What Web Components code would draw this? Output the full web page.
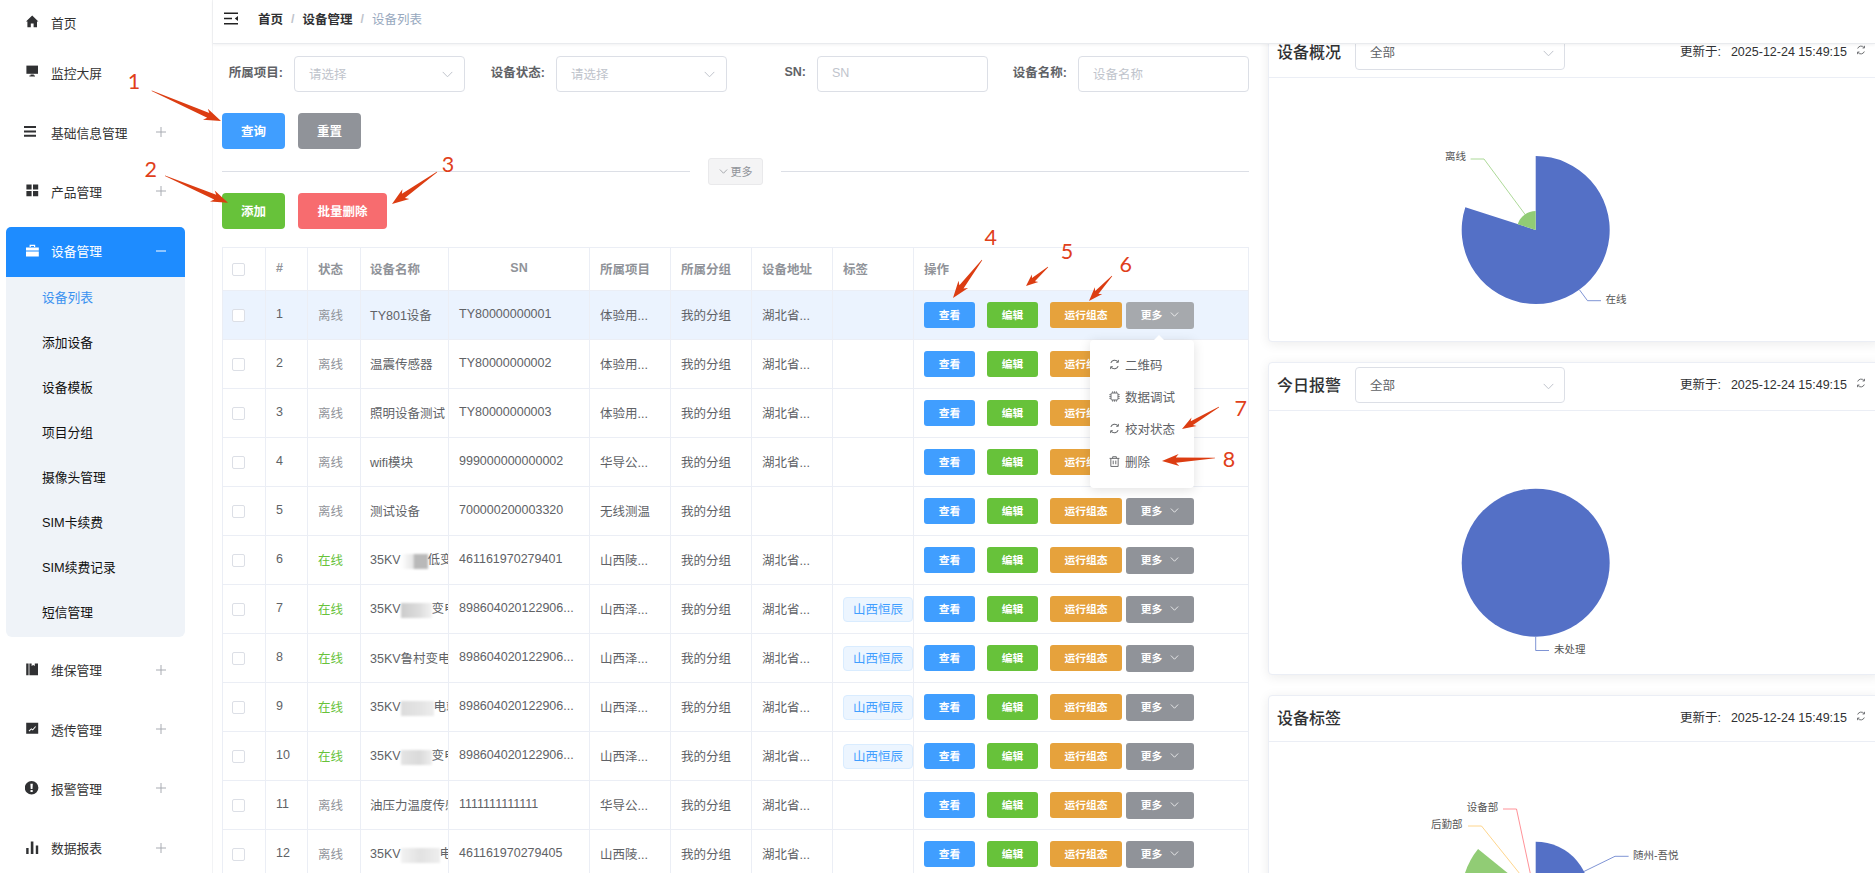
<!DOCTYPE html>
<html lang="zh-CN">
<head>
<meta charset="utf-8">
<title>设备列表</title>
<style>
html,body{margin:0;height:873px;overflow:hidden;background:#fff;}
body{font-family:"Liberation Sans","Noto Sans CJK SC",sans-serif;font-size:12.5px;color:#606266;}
</style>
</head>
<body>
<app-shell>
  <side-nav slot="side"></side-nav>
  <top-bar slot="top"></top-bar>
  <device-page slot="left"></device-page>
  <stat-card slot="right" title="设备概况" select="全部" chart="a"></stat-card>
  <stat-card slot="right" title="今日报警" select="全部" chart="b"></stat-card>
  <stat-card slot="right" title="设备标签" chart="c" compact></stat-card>
</app-shell>
<more-menu></more-menu>
<annot-layer></annot-layer>
<script>
const FONT='"Liberation Sans","Noto Sans CJK SC",sans-serif';
const chevron=(c='#c0c4cc',s=11)=>`<svg width="${s}" height="${Math.round(s*.6)}" viewBox="0 0 11 6.6" fill="none" stroke="${c}" stroke-width="1"><path d="M.7.7 5.5 5.6 10.3.7"/></svg>`;
const refresh=(c='#606266',s=11)=>`<svg width="${s}" height="${s}" viewBox="0 0 12 12" fill="none" stroke="${c}" stroke-width="1.1"><path d="M2 4.2A4.4 4.4 0 0 1 9.6 3"/><path d="M10 7.8A4.4 4.4 0 0 1 2.4 9"/><path d="M10.2 1v2.6H7.8" stroke-width="1"/><path d="M1.8 11V8.4h2.4" stroke-width="1"/></svg>`;

class Base extends HTMLElement{
  connectedCallback(){ if(this.shadowRoot) return; this.attachShadow({mode:'open'}).innerHTML=this.render(); }
}

customElements.define('app-shell',class extends Base{render(){return `
<style>
:host{display:grid;grid-template-columns:213px 1fr;width:1875px;height:873px;overflow:hidden;}
.side{overflow:hidden;height:873px;border-right:1px solid #f2f3f5;box-sizing:border-box;}
.main{display:flex;flex-direction:column;min-width:0;height:873px;}
.top{position:relative;z-index:1;}
.body{display:flex;flex:1;min-height:0;}
.left{width:1047px;flex:none;overflow:hidden;}
.right{flex:1;min-width:0;overflow:hidden;padding-left:8px;}
.cards{display:flex;flex-direction:column;gap:20px;margin-top:-15px;width:612px;padding-bottom:40px;}
</style>
<div class="side"><slot name="side"></slot></div>
<div class="main">
  <div class="top"><slot name="top"></slot></div>
  <div class="body">
    <div class="left"><slot name="left"></slot></div>
    <div class="right"><div class="cards"><slot name="right"></slot></div></div>
  </div>
</div>`}});

const ICONS={
 home:'<path d="M6.2 .6 12.4 6.4 11 6.4V12.2H7.6V8.4H4.8V12.2H1.4V6.4H0Z"/>',
 screen:'<path d="M.4 .6H12V8.8H.4Z"/><path d="M4.6 9.6H7.8V10.6H9V11.4H3.4V10.6H4.6Z"/>',
 list:'<path d="M0 1H12V3H0ZM0 5.4H12V7.4H0ZM0 9.8H12V11.8H0Z"/>',
 grid:'<path d="M.4 .4H5.6V5.6H.4ZM7 .4H12.2V5.6H7ZM.4 7H5.6V12.2H.4ZM7 7H12.2V12.2H7Z"/>',
 brief:'<path d="M3.6 3V.8H9.2V3H8V2H4.8V3Z"/><path d="M0 3.4H12.8V6.6H0ZM0 7.6H12.8V12.4H0Z"/>',
 book:'<path d="M.2 .6H2.6V12.2H.2ZM3.4 .6H5.6V3L7.2 2 8.8 3V.6H12V12.2H3.4Z"/>',
 chart:'<path fill-rule="evenodd" d="M.2 .8H12.2V11.8H.2ZM2.6 8.8 3.3 9.5 5.4 7.6 6.8 8.6 10 4.8 9.3 4.2 6.6 7.2 5.3 6.3Z"/>',
 alert:'<path fill-rule="evenodd" d="M6.6 0a6.8 6.8 0 1 1 0 13.6A6.8 6.8 0 0 1 6.6 0ZM5.4 2.8 5.7 8H7.5L7.8 2.8ZM5.5 9V10.9H7.7V9Z"/>',
 bars:'<path d="M.2 7H2.6V13H.2ZM4.8 .4H7.4V13H4.8ZM9.8 4.4H12.2V13H9.8Z"/>'
};
const navSvg=(k,c)=>`<svg width="14" height="14" viewBox="0 0 14 14" fill="${c}">${ICONS[k]}</svg>`;

customElements.define('nav-item',class extends Base{render(){
  const on=this.hasAttribute('open');
  const has=this.hasAttribute('more');
  const col=on?'#fff':'#333';
  return `<style>
  :host{display:flex;align-items:center;height:50px;margin-inline:6px;width:179px;padding:0 0 2px 20px;box-sizing:border-box;
    color:${col};font-size:12.75px;${on?'background:#1e8cff;border-radius:5px 5px 0 0;':''}}
  .ic{width:14px;height:14px;display:flex;margin-left:${this.getAttribute('shift')||0}px;flex:none;}
  .tx{margin-left:${11-(+this.getAttribute('shift')||0)}px;flex:1;white-space:nowrap;}
  .p{width:10px;height:10px;margin-right:19px;flex:none;}
  </style>
  <span class="ic">${navSvg(this.getAttribute('icon'),on?'#fff':'#303133')}</span>
  <span class="tx"><slot></slot></span>
  ${has?`<svg class="p" viewBox="0 0 10 10" stroke="${on?'#fff':'#a8abb2'}" stroke-width="1">${on?'':'<path d="M5 0V10"/>'}<path d="M0 5H10"/></svg>`:''}`;
}});

customElements.define('side-nav',class extends Base{render(){
  const subs=['设备列表','添加设备','设备模板','项目分组','摄像头管理','SIM卡续费','SIM续费记录','短信管理'];
  return `<style>
  :host{display:flex;flex-direction:column;margin-top:-2px;}
  .g{display:flex;flex-direction:column;gap:9.3px;margin-top:10px;}
  .sub{margin:0 6px;width:179px;background:#eff3f8;border-radius:0 0 6px 6px;display:flex;flex-direction:column;margin-top:-9.3px;}
  .sub div{height:45px;line-height:42px;padding-left:36px;color:#111;font-size:12.75px;white-space:nowrap;}
  .sub .on{color:#3b92f0;}
  </style>
  <nav-item icon="home">首页</nav-item>
  <nav-item icon="screen">监控大屏</nav-item>
  <div class="g">
    <nav-item icon="list" more shift="-2">基础信息管理</nav-item>
    <nav-item icon="grid" more>产品管理</nav-item>
    <nav-item icon="brief" more open>设备管理</nav-item>
    <div class="sub">${subs.map((s,i)=>`<div class="${i?'':'on'}">${s}</div>`).join('')}</div>
    <nav-item icon="book" more>维保管理</nav-item>
    <nav-item icon="chart" more>透传管理</nav-item>
    <nav-item icon="alert" more shift="-1">报警管理</nav-item>
    <nav-item icon="bars" more>数据报表</nav-item>
  </div>`;
}});

customElements.define('top-bar',class extends Base{render(){return `<style>
 :host{display:flex;align-items:center;height:44px;box-sizing:border-box;background:#fff;border-bottom:1px solid #e9ebee;box-shadow:0 1px 3px rgba(0,21,41,.06);padding:0 0 6px 11px;font-size:12.5px;}
 svg{margin-right:20px;flex:none}
 b{color:#303133;font-weight:600}
 i{font-style:normal;color:#c0c4cc;margin:0 8px;font-weight:600}
 span{color:#97a8be}
 </style>
 <svg width="14" height="13" viewBox="0 0 14 13"><path d="M0 .5H14V2H0ZM0 5.8H8V7.2H0ZM0 11H14V12.5H0Z" fill="#222"/><path d="M14 4 10.8 6.5 14 9Z" fill="#222"/></svg>
 <b>首页</b><i>/</i><b>设备管理</b><i>/</i><span>设备列表</span>`}});

customElements.define('ui-btn',class extends Base{render(){
  const tones={primary:'#409eff',gray:'#909399',success:'#67c23a',danger:'#f76c6f',warning:'#e6a23c',hover:'#a6a9ad'};
  const g=(a,d)=>this.getAttribute(a)||d;
  return `<style>:host{display:inline-flex;align-items:center;justify-content:center;gap:8px;flex:none;box-sizing:border-box;white-space:nowrap;padding-bottom:2px;
    width:${g('w',63)}px;height:${g('h',36)}px;border-radius:${g('r',4)}px;background:${tones[g('tone','primary')]};color:#fff;font-size:${g('fs',12.5)}px;font-weight:700;}
  </style><slot></slot>`;
}});

customElements.define('form-field',class extends Base{render(){
  const sel=this.hasAttribute('select');
  return `<style>:host{display:flex;align-items:center;justify-content:flex-end;gap:11px;min-width:0;}
  label{font-weight:700;color:#606266;font-size:12.5px;white-space:nowrap;margin-top:-5px}
  .box{width:171px;height:36px;box-sizing:border-box;border:1px solid #dcdfe6;border-radius:4px;display:flex;align-items:center;justify-content:space-between;padding:0 11px 2px 14px;color:#c0c4cc;font-size:12.5px;background:#fff;}
  .box svg{margin-top:3px}
  </style><label>${this.getAttribute('label')}:</label><div class="box"><span>${this.getAttribute('ph')}</span>${sel?chevron():''}</div>`;
}});

const R=(n,st,name,sn,pj,addr,tag)=>({n,st,name,sn,pj,addr,tag});
const blur=(w,bg)=>`<span class="blur" style="width:${w}px;background:${bg}"></span>`;
const ROWS=[
 R(1,0,'TY801设备','TY80000000001','体验用...','湖北省...'),
 R(2,0,'温震传感器','TY80000000002','体验用...','湖北省...'),
 R(3,0,'照明设备测试','TY80000000003','体验用...','湖北省...'),
 R(4,0,'wifi模块','999000000000002','华导公...','湖北省...'),
 R(5,0,'测试设备','700000200003320','无线测温',''),
 R(6,1,'35KV'+blur(27,'linear-gradient(90deg,#fff,#e6e6e6 45%,#b9b9b9 50%,#b9b9b9)')+'低变电站','461161970279401','山西陵...','湖北省...'),
 R(7,1,'35KV'+blur(31,'linear-gradient(90deg,#ccc,#ddd 60%,#f2f2f2)')+'变电站','898604020122906...','山西泽...','湖北省...','山西恒辰'),
 R(8,1,'35KV鲁村变电站','898604020122906...','山西泽...','湖北省...','山西恒辰'),
 R(9,1,'35KV'+blur(33,'linear-gradient(90deg,#dcdcdc,#e4e4e4 60%,#ededed)')+'电站','898604020122906...','山西泽...','湖北省...','山西恒辰'),
 R(10,1,'35KV'+blur(31,'linear-gradient(90deg,#e4e4e4,#dadada 60%,#eee)')+'变电站','898604020122906...','山西泽...','湖北省...','山西恒辰'),
 R(11,0,'油压力温度传感器','1111111111111','华导公...','湖北省...'),
 R(12,0,'35KV'+blur(39,'linear-gradient(90deg,#f2f2f2,#e2e2e2 50%,#eee)')+'电站','461161970279405','山西陵...','湖北省...')
];

customElements.define('device-table',class extends Base{render(){
  const w=[43,42,53,88,141,81,81,81,81,335];
  const head=['<span class="cb"></span>','#','状态','设备名称','SN','所属项目','所属分组','设备地址','标签','操作'];
  const row=(r,i)=>`<tr class="${i==0?'hl':''}">
   <td class="c"><span class="cb"></span></td><td>${r.n}</td>
   <td style="color:${r.st?'#67c23a':'#909399'}">${r.st?'在线':'离线'}</td>
   <td class="name">${r.name}</td><td>${r.sn}</td><td>${r.pj}</td><td>我的分组</td><td>${r.addr}</td>
   <td class="f">${r.tag?`<span class="tag">${r.tag}</span>`:''}</td>
   <td class="f"><div class="ops">
     <ui-btn w="51" h="26" fs="10.75" r="3">查看</ui-btn>
     <ui-btn w="51" h="26" fs="10.75" r="3" tone="success">编辑</ui-btn>
     <ui-btn w="72" h="26" fs="10.75" r="3" tone="warning" style="margin-right:-8px">运行组态</ui-btn>
     <ui-btn w="68" h="27" fs="10.75" r="3" tone="${i==0?'hover':'gray'}">更多 ${chevron('#fff',9)}</ui-btn>
   </div></td></tr>`;
  return `<style>
  :host{display:block;width:1027px;margin-top:18px;}
  table{border-collapse:separate;border-spacing:0;table-layout:fixed;width:1027px;border-left:1px solid #ebeef5;border-top:1px solid #ebeef5;font-size:12.5px;color:#606266;}
  th,td{box-sizing:border-box;height:49px;padding:0 0 2px 10px;border-right:1px solid #ebeef5;border-bottom:1px solid #ebeef5;text-align:left;white-space:nowrap;overflow:hidden;}
  td.f{padding-bottom:0;}
  th{height:43px;font-weight:700;color:#909399;}
  th:nth-child(5){text-align:center;padding:0 0 2px;}
  th:nth-child(4),td.name{padding-left:9px;padding-right:0;}
  th:first-child,td.c{padding:0 0 1px 9px;}
  tr.hl td{background:#ebf3fe;}
  .cb{display:inline-block;width:13px;height:13px;box-sizing:border-box;border:1px solid #dcdfe6;border-radius:2px;background:#fff;vertical-align:middle;}
  .tag{display:inline-flex;align-items:center;height:25px;box-sizing:border-box;padding:0 9px 1px;background:#ecf5ff;border:1px solid #d9ecff;border-radius:4px;color:#409eff;}
  .ops{display:flex;align-items:center;gap:12px;}
  .blur{display:inline-block;height:15px;vertical-align:middle;filter:blur(1.2px);}
  </style>
  <table><colgroup>${w.map(x=>`<col style="width:${x}px">`).join('')}</colgroup>
  <thead><tr>${head.map(h=>`<th>${h}</th>`).join('')}</tr></thead>
  <tbody>${ROWS.map(row).join('')}</tbody></table>`;
}});

customElements.define('device-page',class extends Base{render(){return `<style>
 :host{display:block;padding:12px 0 0 9px;width:1027px;}
 .form{display:grid;grid-template-columns:243px 262px 261px 261px;height:36px;}
 .btns{display:flex;gap:13px;}
 .q{margin-top:21px;}
 .div{display:flex;align-items:center;gap:18px;height:44px;}
 .div hr{flex:1;border:0;border-top:1px solid #dcdfe6;margin:0;}
 .more{display:flex;align-items:center;justify-content:center;gap:3px;width:55px;height:27px;box-sizing:border-box;background:#f4f4f5;border:1px solid #e9e9eb;border-radius:3px;color:#909399;font-size:11px;}
 </style>
 <div class="form">
  <form-field label="所属项目" ph="请选择" select></form-field>
  <form-field label="设备状态" ph="请选择" select></form-field>
  <form-field label="SN" ph="SN"></form-field>
  <form-field label="设备名称" ph="设备名称"></form-field>
 </div>
 <div class="btns q"><ui-btn>查询</ui-btn><ui-btn tone="gray">重置</ui-btn></div>
 <div class="div"><hr><span class="more">${chevron('#909399',9)}更多</span><hr></div>
 <div class="btns"><ui-btn tone="success">添加</ui-btn><ui-btn tone="danger" w="89">批量删除</ui-btn></div>
 <device-table></device-table>`}});

const pt=(cx,cy,r,deg)=>{const a=deg*Math.PI/180;return [cx+r*Math.sin(a),cy-r*Math.cos(a)]};
const sector=(cx,cy,r,a0,a1,fill)=>{const p=pt(cx,cy,r,a0),q=pt(cx,cy,r,a1);
  return `<path fill="${fill}" d="M${cx} ${cy}L${p[0].toFixed(2)} ${p[1].toFixed(2)}A${r} ${r} 0 ${a1-a0>180?1:0} 1 ${q[0].toFixed(2)} ${q[1].toFixed(2)}Z"/>`};
const line=(pts,c)=>`<polyline fill="none" stroke="${c}" stroke-opacity=".75" points="${pts.map(p=>p.join(',')).join(' ')}"/>`;
const lab=(x,y,t)=>`<text x="${x}" y="${y}" font-size="10.5" fill="#555" dominant-baseline="middle">${t}</text>`;
const BLUE='#5470c6',GREEN='#91cc75';
// svg coordinates: page x - 1269, page y - (card content top)
const CHARTS={
 a(){const X=x=>x-1269,Y=y=>y-79;const cx=266.7,cy=152;return sector(cx,cy,74,0,288,BLUE)+sector(cx,cy,19,288,360,GREEN)
   +line([[X(1525.5),Y(216)],[X(1484),Y(160)],[X(1470.6),Y(160)]],GREEN)+lab(X(1445),Y(158.5),'离线')
   +line([[X(1579.6),Y(291)],[X(1587.5),Y(301.7)],[X(1601),Y(301.7)]],BLUE)+lab(X(1605.5),Y(301.5),'在线');},
 b(){const X=x=>x-1269,Y=y=>y-412;const cx=266.7,cy=151.7;return `<circle cx="${cx}" cy="${cy}" r="74" fill="${BLUE}"/>`
   +line([[cx,Y(638)],[cx,Y(651.5)],[X(1549),Y(651.5)]],BLUE)+lab(X(1554),Y(651.5),'未处理');},
 c(){const X=x=>x-1269,Y=y=>y-743;const cx=266.7,cy=153.7;return sector(cx,cy,54,0,100,BLUE)+sector(cx,cy,74.2,282,309,GREEN)
   +line([[X(1531.5),Y(880)],[X(1516.5),Y(810)],[X(1503),Y(810)]],'#ff6e76')+lab(X(1466.7),Y(809),'设备部')
   +line([[X(1524),Y(880)],[X(1481.5),Y(827)],[X(1468),Y(827)]],'#fdc765')+lab(X(1431),Y(826),'后勤部')
   +line([[X(1583.5),Y(872.7)],[X(1615),Y(857.3)],[X(1628.6),Y(857.3)]],BLUE)+lab(X(1633),Y(857),'随州-吾悦');}
};

customElements.define('stat-card',class extends Base{render(){
  const t=this.getAttribute('title'),s=this.getAttribute('select'),k=this.getAttribute('chart');
  const small=this.hasAttribute('compact');
  return `<style>
  :host{display:flex;flex-direction:column;height:313px;box-sizing:border-box;border:1px solid #ebeef5;border-radius:4px;background:#fff;box-shadow:0 2px 12px rgba(0,0,0,.08);overflow:hidden;flex:none;}
  .h{display:flex;align-items:center;height:${small?46:48}px;box-sizing:border-box;flex:none;border-bottom:1px solid #ebeef5;padding:0 13px ${small?1:3}px 8px;}
  .t{font-size:16px;font-weight:500;color:#303133;white-space:nowrap;margin-bottom:3px;}
  .sel{width:210px;height:36px;box-sizing:border-box;margin-left:14px;border:1px solid #dcdfe6;border-radius:4px;display:flex;align-items:center;justify-content:space-between;padding:0 10px 1px 14px;color:#606266;font-size:12.5px;}
  .sel svg{margin-top:3px}
  .up{margin-left:auto;display:flex;align-items:center;gap:9px;color:#303133;font-size:12.5px;white-space:nowrap;margin-bottom:4px}
  .up b{font-weight:400;margin-right:3px}
  svg.ch{display:block;flex:1;width:100%;font-family:${FONT.replace(/"/g,"'")};overflow:visible}
  </style>
  <div class="h"><span class="t">${t}</span>${s?`<div class="sel"><span>${s}</span>${chevron()}</div>`:''}
    <div class="up"><span><b>更新于:</b>&nbsp;&nbsp;2025-12-24 15:49:15</span>${refresh('#606266',10)}</div></div>
  <svg class="ch">${CHARTS[k]()}</svg>`;
}});

customElements.define('more-menu',class extends Base{render(){
  const chip='<svg width="11" height="11" viewBox="0 0 12 12" fill="none" stroke="#606266" stroke-width="1"><rect x="2.2" y="2.2" width="7.6" height="7.6" rx="1"/><path d="M4 .4V2M6 .4V2M8 .4V2M4 10V11.6M6 10V11.6M8 10V11.6M.4 4H2M.4 6H2M.4 8H2M10 4H11.6M10 6H11.6M10 8H11.6"/></svg>';
  const trash='<svg width="11" height="11" viewBox="0 0 12 12" fill="none" stroke="#606266" stroke-width="1"><path d="M.6 2.6H11.4M4 2.6V.8H8V2.6M2 2.6V11.4H10V2.6M4.6 5V9M7.4 5V9"/></svg>';
  const it=[[refresh(),'二维码'],[chip,'数据调试'],[refresh(),'校对状态'],[trash,'删除']];
  return `<style>
  :host{position:absolute;left:1090px;top:340px;width:104px;height:148px;box-sizing:border-box;padding-top:8px;background:#fff;border-radius:4px;box-shadow:0 2px 12px rgba(0,0,0,.12);z-index:5;font-size:12.5px;color:#606266;}
  :host::before{content:"";position:absolute;left:64px;top:-5px;border:5px solid transparent;border-top:0;border-bottom-color:#fff;}
  div{display:flex;align-items:center;gap:5px;height:32.4px;padding-left:19px;white-space:nowrap;}
  svg{flex:none}
  </style>${it.map(x=>`<div>${x[0]}<span>${x[1]}</span></div>`).join('')}`;
}});

customElements.define('annot-layer',class extends Base{render(){
  const RED='#dc3d12';
  const arrow=(x0,y0,x1,y1)=>{
    const dx=x1-x0,dy=y1-y0,L=Math.hypot(dx,dy),ux=dx/L,uy=dy/L,nx=-uy,ny=ux;
    const hl=L>45?17:L>32?14:12,w1=L>45?2.6:2.2,w2=L>45?6:5;
    const P=(a,b)=>[(x0+ux*a+nx*b).toFixed(1),(y0+uy*a+ny*b).toFixed(1)].join(',');
    return `<polygon fill="${RED}" points="${[P(0,.3),P(L-hl*.82,w1),P(L-hl,w2),P(L,0),P(L-hl,-w2),P(L-hl*.82,-w1),P(0,-.3)].join(' ')}"/>`;
  };
  const A=[[151.7,90.7,221,121],[165,175.7,228,202.7],[437,172,392,204],[982,260,953,298],[1048,267,1026,286],[1112,276,1089,301],[1219,407,1182,429],[1215,458,1162,461]];
  const N=[[134,89,1],[150.7,177,2],[448,172,3],[990.7,245,4],[1067,259,5],[1125.7,272,6],[1240.7,416,7],[1229,467,8]];
  return `<style>:host{position:absolute;left:0;top:0;width:1875px;height:873px;pointer-events:none;z-index:9;}
  svg{display:block}text{font-family:Lato,"Open Sans",sans-serif;font-size:21.5px;fill:#e0401a;text-anchor:middle}</style>
  <svg width="1875" height="873" viewBox="0 0 1875 873">${A.map(a=>arrow(...a)).join('')}${N.map(n=>`<text x="${n[0]}" y="${n[1]}">${n[2]}</text>`).join('')}</svg>`;
}});
</script>
</body>
</html>
